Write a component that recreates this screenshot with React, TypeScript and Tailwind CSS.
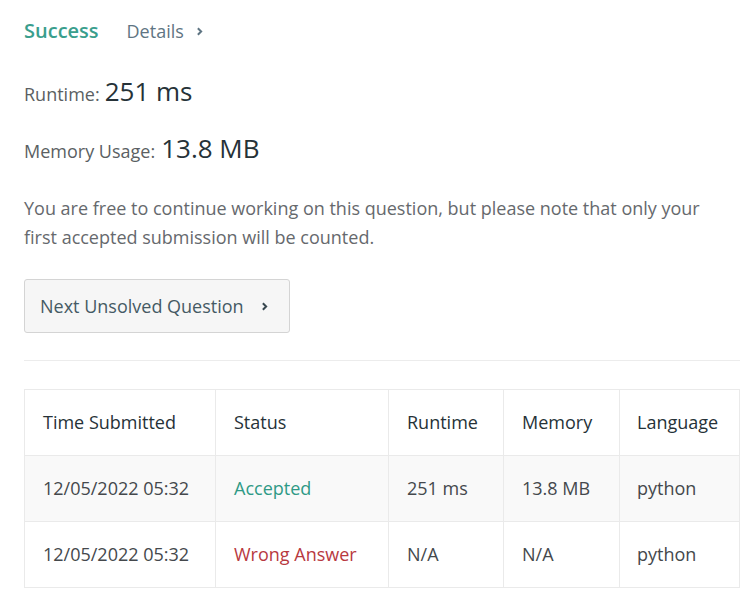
import React from "react";

const rows = [
  { time: "12/05/2022 05:32", status: "Accepted", ok: true, runtime: "251 ms", memory: "13.8 MB", lang: "python" },
  { time: "12/05/2022 05:32", status: "Wrong Answer", ok: false, runtime: "N/A", memory: "N/A", lang: "python" },
];

function Chevron({ className }: { className?: string }) {
  return (
    <svg viewBox="0 0 10 10" className={className} fill="none" stroke="currentColor" strokeWidth="1.8">
      <path d="M3.5 2l3 3-3 3" />
    </svg>
  );
}

export default function App() {
  return (
    <div className="min-h-[596px] w-[753px] bg-white px-6 pt-[15px] font-['Open_Sans',sans-serif]">
      <div className="flex items-center h-[32px]">
        <span className="text-[20px] font-semibold text-[#3a9e8d]">Success</span>
        <span className="ml-[28px] flex items-center text-[18px] text-[#5f7583]">
          Details
          <Chevron className="ml-[10px] w-[11px] h-[11px] text-[#5f7583]" />
        </span>
      </div>

      <div className="mt-[26px] flex h-[36px] items-baseline leading-[36px]">
        <span className="text-[18px] text-[#5b5f63]">Runtime:</span>
        <span className="ml-[5px] text-[26px] text-[#263238]">251 ms</span>
      </div>

      <div className="mt-[21px] flex h-[36px] items-baseline leading-[36px]">
        <span className="text-[18px] text-[#5b5f63]">Memory Usage:</span>
        <span className="ml-[6px] text-[26px] text-[#263238]">13.8 MB</span>
      </div>

      <p className="mt-[28px] text-[18px] leading-[29px] text-[#66696d]">
        You are free to continue working on this question, but please note that only your
        <br />
        first accepted submission will be counted.
      </p>

      <button className="mt-[27px] flex h-[54px] w-[266px] items-center rounded-[3px] border border-[#d4d4d4] bg-[#f6f6f6] pl-[15px] text-[18px] text-[#455a64]">
        Next Unsolved Question
        <Chevron className="ml-[15px] w-[11px] h-[11px] text-[#37474f]" />
      </button>

      <div className="mt-[27px] h-px w-[716px] bg-[#ececec]" />

      <table className="mt-[28px] w-[716px] border-collapse text-[18px]">
        <thead>
          <tr className="h-[66px]">
            <th className="w-[191px] border border-[#eaeaea] pl-[18px] text-left font-normal text-[#263238]">Time Submitted</th>
            <th className="w-[173px] border border-[#eaeaea] pl-[18px] text-left font-normal text-[#263238]">Status</th>
            <th className="w-[115px] border border-[#eaeaea] pl-[18px] text-left font-normal text-[#263238]">Runtime</th>
            <th className="w-[116px] border border-[#eaeaea] pl-[18px] text-left font-normal text-[#263238]">Memory</th>
            <th className="border border-[#eaeaea] pl-[17px] text-left font-normal text-[#263238]">Language</th>
          </tr>
        </thead>
        <tbody>
          {rows.map((r, i) => (
            <tr key={i} className={i === 0 ? "h-[66px] bg-[#f9f9f9]" : "h-[66px] bg-white"}>
              <td className="border border-[#eaeaea] pl-[18px] text-[#44484c]">{r.time}</td>
              <td className={r.ok ? "border border-[#eaeaea] pl-[18px] text-[#2f9a86]" : "border border-[#eaeaea] pl-[18px] text-[#b8393f]"}>
                {r.status}
              </td>
              <td className="border border-[#eaeaea] pl-[18px] text-[#44484c]">{r.runtime}</td>
              <td className="border border-[#eaeaea] pl-[18px] text-[#44484c]">{r.memory}</td>
              <td className="border border-[#eaeaea] pl-[17px] text-[#44484c]">{r.lang}</td>
            </tr>
          ))}
        </tbody>
      </table>
    </div>
  );
}
